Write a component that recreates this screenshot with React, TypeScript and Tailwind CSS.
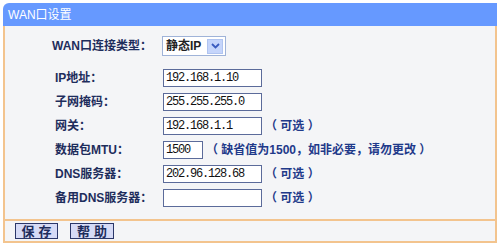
import React from 'react';

const cjk = { fontFamily: '"Liberation Sans", "Noto Sans CJK SC", sans-serif' };
const mono = { fontFamily: '"Liberation Mono", "Noto Sans CJK SC", monospace' };

function Field({ value, width = 'w-[99px]' }: { value: string; width?: string }) {
  return (
    <div
      className={`${width} h-[18px] bg-white border border-[#5b6b9a] flex items-center pl-[2px] text-[12px] tracking-[-1.2px] text-[#111]`}
      style={mono}
    >
      {value}
    </div>
  );
}

function Note({ children }: { children: React.ReactNode }) {
  return <span className="ml-[3px] text-[12px] font-bold text-[#1f3a8a] whitespace-nowrap">{children}</span>;
}

function Row({ label, children }: { label: string; children: React.ReactNode }) {
  return (
    <div className="grid grid-cols-[108px_1fr] items-center h-[24px]">
      <span className="text-[12px] font-bold text-[#1e2d5c] whitespace-nowrap">{label}</span>
      <div className="flex items-center">{children}</div>
    </div>
  );
}

export default function App() {
  return (
    <div className="w-[500px] h-[249px] bg-white pt-[3px] px-[3px]" style={cjk}>
      <div className="w-[494px]">
        {/* Title bar */}
        <div className="h-[23px] bg-[#6699ff] rounded-tl-[6px] flex items-center pl-[5px] text-white text-[12px]">
          WAN口设置
        </div>

        {/* Form body */}
        <div className="bg-[#f4f5f7] border-x-2 border-[#f3c48e] pt-[10px] pb-[9px] pl-[50px]">
          <div className="grid grid-cols-[110px_1fr] items-center h-[20px] -ml-[3px] mb-[10px]">
            <span className="text-[12px] font-bold text-[#1e2d5c] whitespace-nowrap">WAN口连接类型：</span>
            <div className="w-[64px] h-[20px] bg-white border border-[#9fb3d8] flex items-center justify-between pl-[3px] pr-[2px]">
              <span className="text-[12px] font-bold text-[#222]">静态IP</span>
              <span className="w-[16px] h-[15px] bg-[#c5d5fb] border border-[#b0c4f0] flex items-center justify-center">
                <svg width="9" height="6" viewBox="0 0 9 6">
                  <path d="M1 1 L4.5 4.5 L8 1" stroke="#3a5bbf" strokeWidth="1.8" fill="none" />
                </svg>
              </span>
            </div>
          </div>

          <Row label="IP地址：">
            <Field value="192.168.1.10" />
          </Row>
          <Row label="子网掩码：">
            <Field value="255.255.255.0" />
          </Row>
          <Row label="网关：">
            <Field value="192.168.1.1" />
            <Note>（ 可选 ）</Note>
          </Row>
          <Row label="数据包MTU：">
            <Field value="1500" width="w-[40px]" />
            <Note>（ 缺省值为1500，如非必要，请勿更改 ）</Note>
          </Row>
          <Row label="DNS服务器：">
            <Field value="202.96.128.68" />
            <Note>（ 可选 ）</Note>
          </Row>
          <Row label="备用DNS服务器：">
            <Field value="" />
            <Note>（ 可选 ）</Note>
          </Row>
        </div>

        {/* Buttons */}
        <div className="h-[24px] bg-[#f4f5f7] border-2 border-[#f3c48e] flex items-center gap-[12px] pl-[10px]">
          <button className="w-[43px] h-[16px] bg-[#d6dbf6] border border-[#2b3769] text-[13px] leading-none font-bold text-[#1e2d5c] tracking-[4px] pl-[4px]">
            保存
          </button>
          <button className="w-[44px] h-[16px] bg-[#d6dbf6] border border-[#2b3769] text-[13px] leading-none font-bold text-[#1e2d5c] tracking-[4px] pl-[4px]">
            帮助
          </button>
        </div>
      </div>
    </div>
  );
}
